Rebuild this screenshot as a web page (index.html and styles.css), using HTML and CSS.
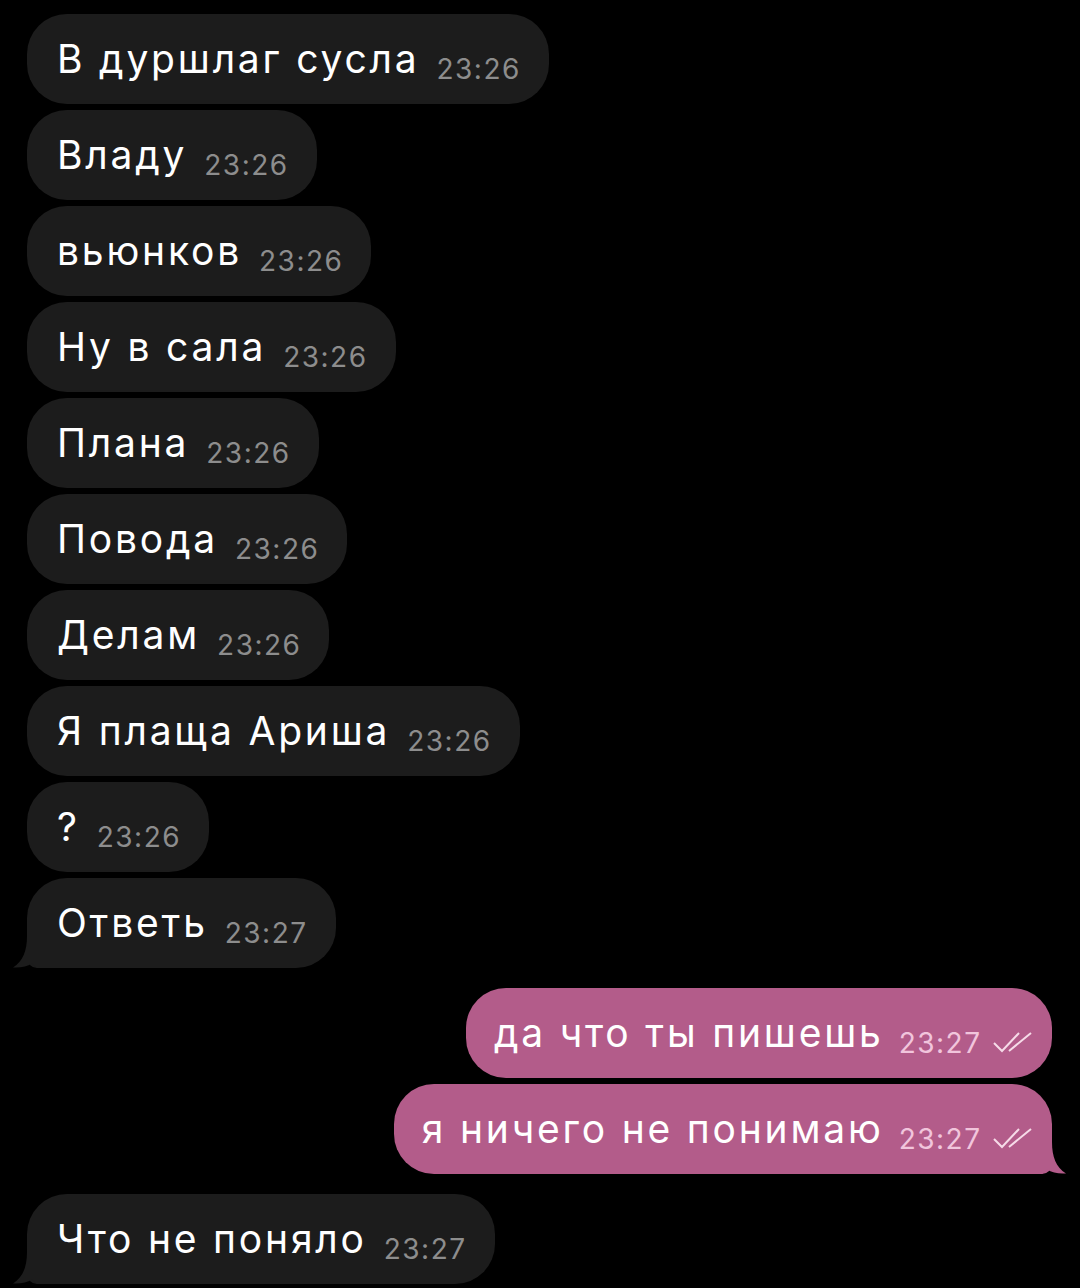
FILE: index.html
```html
<!DOCTYPE html>
<html lang="ru">

<head>
    <meta charset="UTF-8">
    <meta name="viewport" content="width=device-width, initial-scale=1.0">
    <title>Chat</title>
    <link rel="stylesheet" href="styles.css">
</head>

<body>
    <div class="chat">
        <div class="row in"><div class="bubble"><span class="text">В дуршлаг сусла</span><span class="time">23:26</span></div></div>
        <div class="row in"><div class="bubble"><span class="text">Владу</span><span class="time">23:26</span></div></div>
        <div class="row in"><div class="bubble"><span class="text">вьюнков</span><span class="time">23:26</span></div></div>
        <div class="row in"><div class="bubble"><span class="text">Ну в сала</span><span class="time">23:26</span></div></div>
        <div class="row in"><div class="bubble"><span class="text">Плана</span><span class="time">23:26</span></div></div>
        <div class="row in"><div class="bubble"><span class="text">Повода</span><span class="time">23:26</span></div></div>
        <div class="row in"><div class="bubble"><span class="text">Делам</span><span class="time">23:26</span></div></div>
        <div class="row in"><div class="bubble"><span class="text">Я плаща Ариша</span><span class="time">23:26</span></div></div>
        <div class="row in"><div class="bubble"><span class="text">?</span><span class="time">23:26</span></div></div>
        <div class="row in"><div class="bubble tail"><span class="text">Ответь</span><span class="time">23:27</span>
            <svg class="tail-icon" width="24" height="32" viewBox="0 0 24 32"><path d="M14 0 C14 15 10 25 0 31.5 C8 32 14 30.5 19 27.5 L24 32 L24 0 Z" /></svg>
        </div></div>

        <div class="row out group"><div class="bubble"><span class="text">да что ты пишешь</span><span class="time">23:27</span>
            <svg class="check" width="42" height="22" viewBox="0 0 42 22"><path d="M2 12 L10 20 L27 2 M17 20 L39 2" /></svg>
        </div></div>
        <div class="row out"><div class="bubble tail"><span class="text">я ничего не понимаю</span><span class="time">23:27</span>
            <svg class="check" width="42" height="22" viewBox="0 0 42 22"><path d="M2 12 L10 20 L27 2 M17 20 L39 2" /></svg>
            <svg class="tail-icon" width="24" height="32" viewBox="0 0 24 32"><path d="M10 0 C10 15 14 25 24 31.5 C16 32 10 30.5 5 27.5 L0 32 L0 0 Z" /></svg>
        </div></div>

        <div class="row in group"><div class="bubble tail"><span class="text">Что не поняло</span><span class="time">23:27</span>
            <svg class="tail-icon" width="24" height="32" viewBox="0 0 24 32"><path d="M14 0 C14 15 10 25 0 31.5 C8 32 14 30.5 19 27.5 L24 32 L24 0 Z" /></svg>
        </div></div>
    </div>
</body>

</html>
```

FILE: styles.css
```css
body {
    margin: 0;
    padding: 0;
    background-color: #000;
    font-family: Inter, "Noto Sans", sans-serif;
}

.chat {
    display: flex;
    flex-direction: column;
    gap: 6px;
    padding: 14px 28px 0 27px;
}

.row {
    display: flex;
}

.row.out {
    justify-content: flex-end;
}

.row.group {
    margin-top: 14px;
}

.bubble {
    position: relative;
    box-sizing: border-box;
    height: 90px;
    line-height: 90px;
    border-radius: 40px;
    padding: 0 28px 0 30px;
    white-space: nowrap;
}

.in .bubble {
    background-color: #1c1c1c;
    color: #fff;
}

.out .bubble {
    background-color: #b35c8a;
    color: #fff;
    padding: 0 18px 0 28px;
}

.text {
    font-size: 39px;
    letter-spacing: 2.8px;
    vertical-align: 2px;
}

.time {
    display: inline-block;
    font-size: 28px;
    letter-spacing: 1.5px;
    line-height: 1;
    margin-left: 17px;
    vertical-align: -4px;
    color: #8d8d8d;
}

.out .time {
    color: #f1c5dc;
    margin-left: 15px;
}

.check {
    display: inline-block;
    vertical-align: -4px;
    margin-left: 6px;
}

.check path {
    fill: none;
    stroke: #f6dbe8;
    stroke-width: 2;
}

.in .bubble.tail {
    border-bottom-left-radius: 10px;
}

.out .bubble.tail {
    border-bottom-right-radius: 10px;
}

.tail-icon {
    position: absolute;
    bottom: 0;
}

.in .tail-icon {
    left: -14px;
    fill: #1c1c1c;
}

.out .tail-icon {
    right: -14px;
    fill: #b35c8a;
}
```
